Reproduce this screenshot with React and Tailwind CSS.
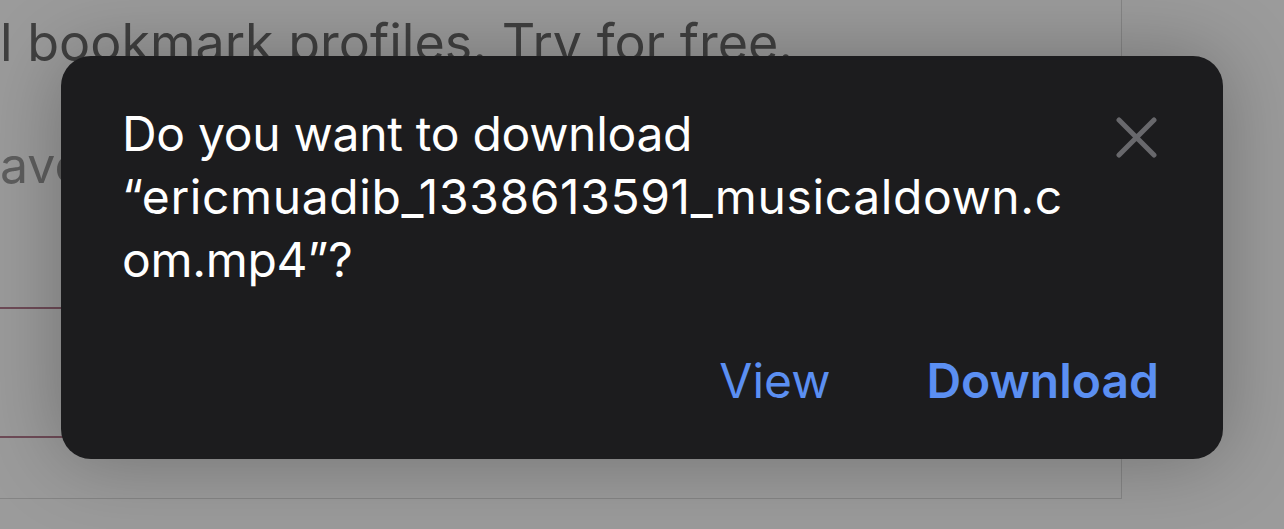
export default function App() {
  const font = { fontFamily: 'Inter, "Noto Sans", sans-serif' };
  return (
    <div className="relative w-[1284px] h-[529px] overflow-hidden bg-[#9b9b9b]" style={font}>
      {/* background page */}
      <div className="w-[1122px] h-[499px] border-r border-b border-[#858585] overflow-hidden">
        <div className="mt-[11px] text-[52px] leading-[64px] text-[#404040] whitespace-nowrap">
          l bookmark profiles. Try for free.
        </div>
        <div className="mt-[60px] text-[50px] leading-[60px] text-[#5e5e5e] whitespace-nowrap">ave</div>
        <div className="mt-[112px] h-[131px] border-t-2 border-b-2 border-[#6e4b57]" />
      </div>

      {/* dialog */}
      <div className="absolute left-[61px] top-[56px] w-[1162px] h-[403px] rounded-[30px] bg-[#1c1c1e] shadow-[0_0_80px_rgba(0,0,0,0.28)] flex flex-col pl-[61px] pr-[64px]">
        <div className="flex items-start pt-[46px]">
          <div className="flex-1 text-white text-[48px] leading-[63px] tracking-[-0.3px] whitespace-nowrap">
            <div>Do you want to download</div>
            <div className="tracking-[0.6px]">“ericmuadib_1338613591_musicaldown.c</div>
            <div>om.mp4”?</div>
          </div>
          <svg className="mt-[15px] mr-[2px] shrink-0" width="41" height="41" viewBox="0 0 41 41">
            <path d="M3 3 L38 38 M38 3 L3 38" stroke="#68686c" strokeWidth="5" strokeLinecap="round" fill="none" />
          </svg>
        </div>
        <div className="flex justify-end items-center gap-[96px] mt-[60px] text-[48px] leading-[60px] text-[#5b8ff2]">
          <span>View</span>
          <span className="font-semibold">Download</span>
        </div>
      </div>
    </div>
  );
}
